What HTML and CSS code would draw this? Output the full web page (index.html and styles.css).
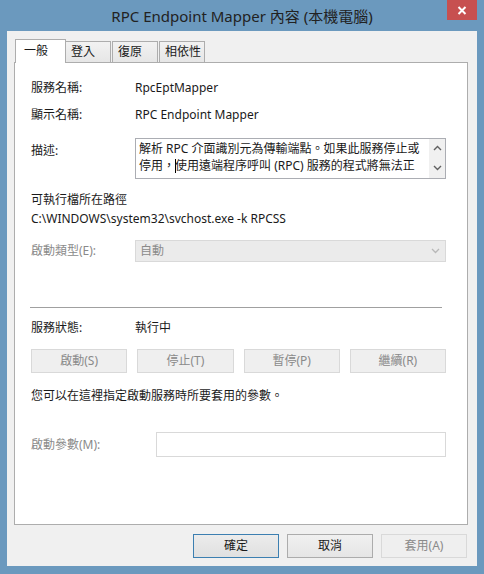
FILE: index.html
```html
<html lang="zh-TW">
  <head>
    <meta charset="utf-8" />
    <link rel="stylesheet" href="styles.css">
  </head>

  <body>
    <div class="window">
      <div class="titlebar">
        <span></span>
        <span class="title">RPC Endpoint Mapper 內容 (本機電腦)</span>
        <div class="close">
          <svg width="10" height="9" viewBox="0 0 10 9">
            <path d="M1.5 1 L8.5 8 M8.5 1 L1.5 8" stroke="#fff" stroke-width="2" />
          </svg>
        </div>
      </div>

      <div class="client">
        <div class="tabs">
          <div class="tab is-selected">一般</div>
          <div class="tab">登入</div>
          <div class="tab">復原</div>
          <div class="tab">相依性</div>
        </div>

        <div class="panel">
          <div class="row">
            <span class="label">服務名稱:</span>
            <span>RpcEptMapper</span>
          </div>
          <div class="row row-display">
            <span class="label">顯示名稱:</span>
            <span>RPC Endpoint Mapper</span>
          </div>
          <div class="row row-desc">
            <span class="label">描述:</span>
            <div class="textbox">
              <div class="textbox-text">
                <div class="line">解析 RPC 介面識別元為傳輸端點。如果此服務停止或</div>
                <div class="line">停用，<span class="caret"></span>使用遠端程序呼叫 (RPC) 服務的程式將無法正</div>
              </div>
              <div class="scrollbar">
                <svg width="9" height="6" viewBox="0 0 9 6"><path d="M1 5 L4.5 1.5 L8 5" fill="none" stroke="#606060" stroke-width="1.4" /></svg>
                <svg width="9" height="6" viewBox="0 0 9 6"><path d="M1 1 L4.5 4.5 L8 1" fill="none" stroke="#606060" stroke-width="1.4" /></svg>
              </div>
            </div>
          </div>

          <div class="path-label">可執行檔所在路徑</div>
          <div class="path">C:\WINDOWS\system32\svchost.exe -k RPCSS</div>

          <div class="row row-startup">
            <span class="label is-disabled">啟動類型(E):</span>
            <div class="combo">
              <span>自動</span>
              <svg width="9" height="6" viewBox="0 0 9 6"><path d="M1 1 L4.5 4.5 L8 1" fill="none" stroke="#b8b8b8" stroke-width="1.3" /></svg>
            </div>
          </div>

          <div class="separator"></div>

          <div class="row row-status">
            <span class="label">服務狀態:</span>
            <span>執行中</span>
          </div>

          <div class="service-buttons">
            <div class="button is-disabled">啟動(S)</div>
            <div class="button is-disabled">停止(T)</div>
            <div class="button is-disabled">暫停(P)</div>
            <div class="button is-disabled">繼續(R)</div>
          </div>

          <div class="note">您可以在這裡指定啟動服務時所要套用的參數。</div>

          <div class="row row-params">
            <span class="label is-disabled">啟動參數(M):</span>
            <div class="input"></div>
          </div>
        </div>

        <div class="actions">
          <div class="button is-default">確定</div>
          <div class="button">取消</div>
          <div class="button is-disabled">套用(A)</div>
        </div>
      </div>
    </div>
  </body>
</html>
```

FILE: styles.css
```css
:root {
  --color-frame: #6b99be;
  --color-client: #f0f0f0;
  --color-border: #adadad;
  --color-text: #1a1a1a;
  --color-disabled: #8a8a8a;
  --color-close: #c75050;
}

* {
  box-sizing: border-box;
}

html {
  font-family: 'Noto Sans', 'Noto Sans CJK TC', sans-serif;
  font-size: 12px;
  color: var(--color-text);
}

body {
  margin: 0;
  width: 484px;
  height: 574px;
  background-color: var(--color-frame);
  overflow: hidden;
}

.window {
  display: flex;
  flex-direction: column;
  height: 100%;
}

.titlebar {
  height: 31px;
  display: grid;
  grid-template-columns: 1fr auto 1fr;
}

.title {
  font-size: 15px;
  line-height: 32px;
  color: #222;
  white-space: nowrap;
}

.close {
  justify-self: end;
  width: 30px;
  height: 20px;
  margin-right: 7px;
  background-color: var(--color-close);
  display: flex;
  align-items: center;
  justify-content: center;
}

.client {
  height: 535px;
  margin: 0 7px;
  padding: 8px 9px 8px 7px;
  background-color: var(--color-client);
  display: flex;
  flex-direction: column;
}

.tabs {
  display: flex;
  align-items: flex-end;
  height: 23px;
  padding-left: 1px;
}

.tab {
  height: 21px;
  min-width: 46px;
  padding: 0 3px 0 5px;
  line-height: 20px;
  border: 1px solid var(--color-border);
  border-bottom: none;
  margin-left: 1px;
  background: linear-gradient(#f2f2f2, #e6e6e6);
}

.tab.is-selected {
  position: relative;
  z-index: 1;
  height: 24px;
  width: 51px;
  margin: 0 -1px -1px 0;
  padding-left: 8px;
  line-height: 22px;
  background: #fff;
}

.tab.is-selected + .tab {
  margin-left: 0;
}

.panel {
  flex: 1;
  background-color: #fff;
  border: 1px solid var(--color-border);
  padding: 17px 21px 0 16px;
}

.row {
  display: grid;
  grid-template-columns: 104px 1fr;
  line-height: 16px;
  white-space: nowrap;
}

.row-display {
  margin-top: 11px;
}

.row-desc {
  margin-top: 15px;
}

.row-desc .label {
  padding-top: 5px;
}

.label.is-disabled {
  color: var(--color-disabled);
}

.textbox {
  height: 41px;
  border: 1px solid #abadb3;
  display: flex;
}

.textbox-text {
  flex: 1;
  overflow: hidden;
  padding: 1px 0 0 3px;
  line-height: 17px;
}

.line {
  white-space: nowrap;
}

.caret {
  display: inline-block;
  width: 1px;
  height: 14px;
  margin-right: -1px;
  vertical-align: -3px;
  background-color: #000;
}

.scrollbar {
  width: 16px;
  background-color: #f0f0f0;
  display: flex;
  flex-direction: column;
  justify-content: space-between;
  align-items: center;
  padding: 6px 0 7px;
}

.path-label {
  margin-top: 13px;
  line-height: 16px;
}

.path {
  margin-top: 3px;
  line-height: 16px;
}

.row-startup {
  margin-top: 13px;
  align-items: center;
}

.combo {
  height: 22px;
  border: 1px solid #d9d9d9;
  background-color: #ebebeb;
  color: var(--color-disabled);
  display: flex;
  align-items: center;
  justify-content: space-between;
  padding: 0 5px 0 4px;
}

.separator {
  margin: 45px 4px 0 -1px;
  height: 1px;
  background-color: #a0a0a0;
}

.row-status {
  margin-top: 12px;
}

.service-buttons {
  margin-top: 13px;
  display: grid;
  grid-template-columns: repeat(4, 1fr);
  gap: 10px;
}

.button {
  height: 24px;
  line-height: 22px;
  text-align: center;
  border: 1px solid #acacac;
  background: linear-gradient(#f0f0f0, #e5e5e5);
}

.button.is-disabled {
  border-color: #d9d9d9;
  background: #efefef;
  color: var(--color-disabled);
}

.button.is-default {
  border-color: #3c7fb1;
  background: linear-gradient(#ececec, #e0e0e0);
}

.note {
  margin-top: 15px;
  line-height: 16px;
}

.row-params {
  margin-top: 28px;
  grid-template-columns: 125px 1fr;
  align-items: center;
}

.input {
  height: 25px;
  border: 1px solid #d9d9d9;
  background-color: #fff;
}

.actions {
  margin-top: 9px;
  display: flex;
  justify-content: flex-end;
  gap: 8px;
  padding-right: 1px;
}

.actions .button {
  width: 86px;
}
```
